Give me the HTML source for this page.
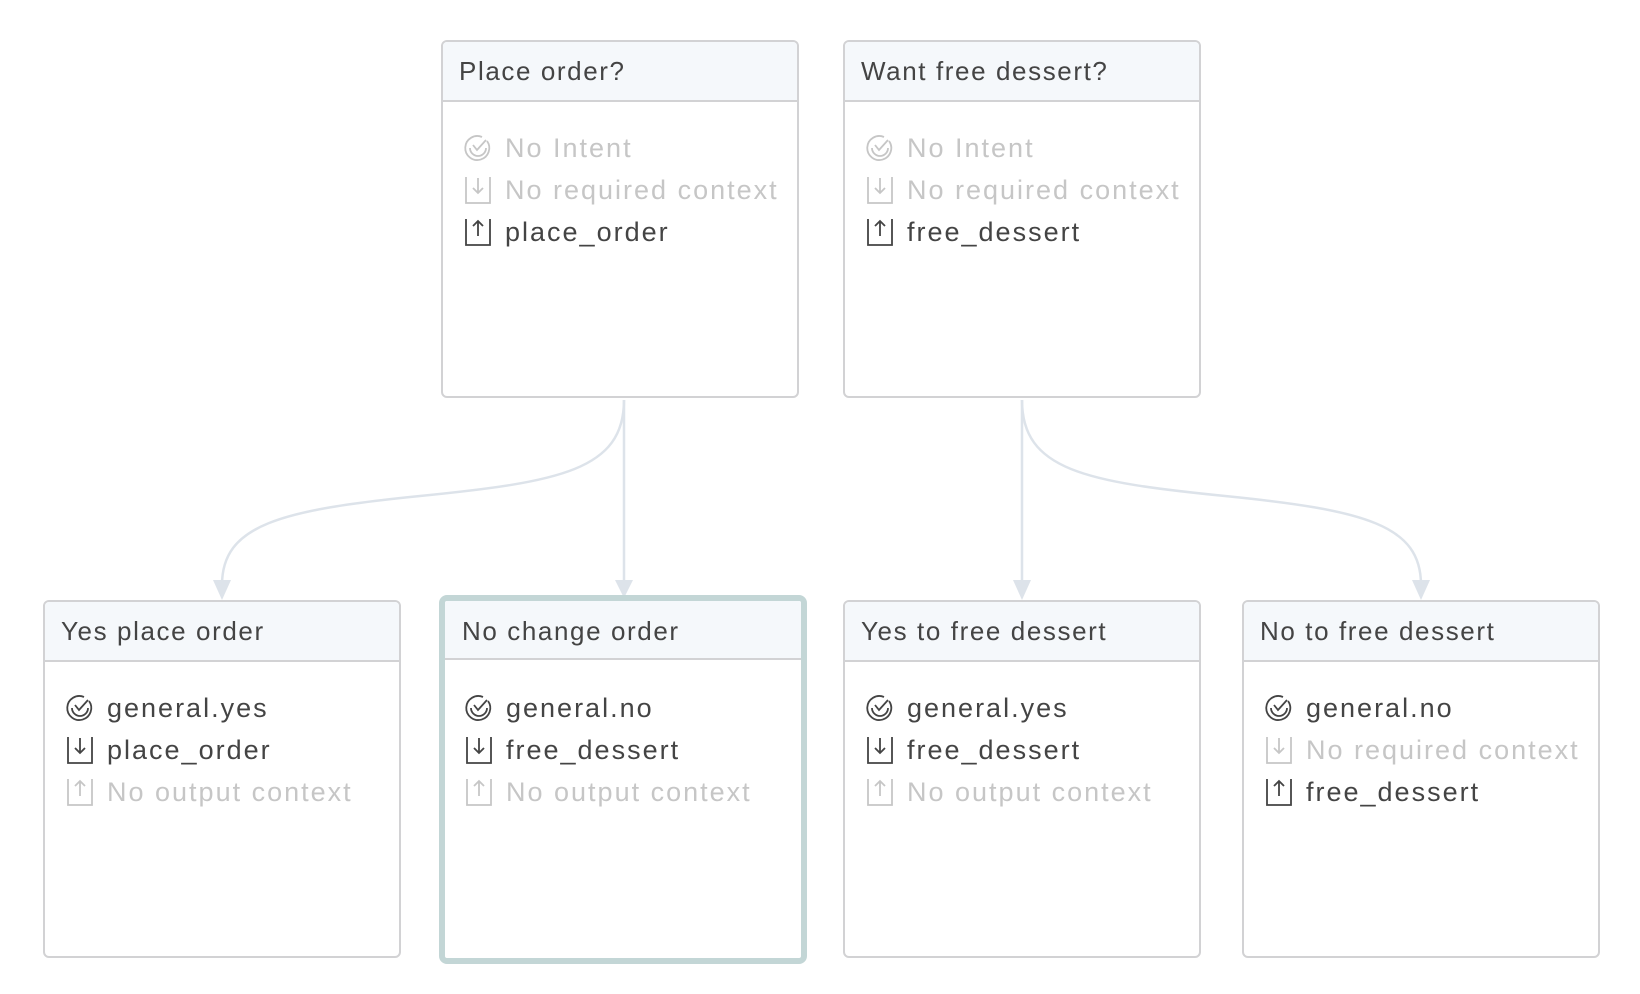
<!DOCTYPE html>
<html><head><meta charset="utf-8"><style>
*{box-sizing:border-box;margin:0;padding:0}
body{width:1640px;height:994px;background:#fff;font-family:"Liberation Sans",sans-serif;position:relative;overflow:hidden}
.box{position:absolute;width:358px;height:358px;border:2px solid #d2d2d4;border-radius:6px;background:#fff;overflow:hidden}
.box.sel{border:6px solid #c3d6d6;border-radius:8px}
.hd{height:60px;background:#f5f8fb;border-bottom:2px solid #d2d2d4;padding-left:16px;font-size:26px;letter-spacing:1.6px;line-height:58px;color:#444}
.bd{padding:25px 0 0 20px}
.r{height:42px;line-height:42px;font-size:27px;letter-spacing:2px;color:#444;display:flex;align-items:center;white-space:nowrap}
.r.m{color:#c6c6c6}
.r svg{width:30px;height:30px;margin-right:12px;flex:none}
</style></head><body>
<svg style="position:absolute;left:0;top:0" width="1640" height="994">
<g fill="none" stroke="#dde3ea" stroke-width="2.5">
<path d="M624 400 C624 470 560 482 420 496 C280 510 222 525 222 585"/>
<path d="M624 400 L624 585"/>
<path d="M1022 400 L1022 585"/>
<path d="M1022 400 C1022 470 1085 482 1225 496 C1365 510 1421 525 1421 585"/>
</g>
<g fill="#dde3ea">
<path d="M213 580 L231 580 L222 600Z"/><path d="M615 580 L633 580 L624 598Z"/>
<path d="M1013 580 L1031 580 L1022 600Z"/><path d="M1412 580 L1430 580 L1421 600Z"/>
</g>
</svg>
<svg width="0" height="0" style="position:absolute"><defs>
<g id="ci" fill="none" stroke="currentColor" stroke-width="1.8"><path d="M24 8 A12 12 0 1 1 19 4"/><path d="M7 15 A8 8 0 1 0 23 15"/><path d="M10 12 L14 17 L23 7"/></g>
<g id="dn" fill="none" stroke="currentColor" stroke-width="1.8"><path d="M3 2 V28 H27 V2"/><path d="M15 3 V18 M10 13 L15 18 L20 13"/></g>
<g id="up" fill="none" stroke="currentColor" stroke-width="1.8"><path d="M3 2 V28 H27 V2"/><path d="M15 19 V4 M10 9 L15 4 L20 9"/></g>
</defs></svg>

<div class="box" style="left:441px;top:40px"><div class="hd">Place order?</div><div class="bd">
<div class="r m"><svg viewBox="0 0 30 30"><use href="#ci"/></svg>No Intent</div>
<div class="r m"><svg viewBox="0 0 30 30"><use href="#dn"/></svg>No required context</div>
<div class="r"><svg viewBox="0 0 30 30"><use href="#up"/></svg>place_order</div></div></div>

<div class="box" style="left:843px;top:40px"><div class="hd">Want free dessert?</div><div class="bd">
<div class="r m"><svg viewBox="0 0 30 30"><use href="#ci"/></svg>No Intent</div>
<div class="r m"><svg viewBox="0 0 30 30"><use href="#dn"/></svg>No required context</div>
<div class="r"><svg viewBox="0 0 30 30"><use href="#up"/></svg>free_dessert</div></div></div>

<div class="box" style="left:43px;top:600px"><div class="hd">Yes place order</div><div class="bd">
<div class="r"><svg viewBox="0 0 30 30"><use href="#ci"/></svg>general.yes</div>
<div class="r"><svg viewBox="0 0 30 30"><use href="#dn"/></svg>place_order</div>
<div class="r m"><svg viewBox="0 0 30 30"><use href="#up"/></svg>No output context</div></div></div>

<div class="box sel" style="left:439px;top:595px;width:368px;height:369px"><div class="hd" style="height:59px;padding-left:17px;line-height:61px">No change order</div><div class="bd" style="padding-left:19px;padding-top:27px">
<div class="r"><svg viewBox="0 0 30 30"><use href="#ci"/></svg>general.no</div>
<div class="r"><svg viewBox="0 0 30 30"><use href="#dn"/></svg>free_dessert</div>
<div class="r m"><svg viewBox="0 0 30 30"><use href="#up"/></svg>No output context</div></div></div>

<div class="box" style="left:843px;top:600px"><div class="hd">Yes to free dessert</div><div class="bd">
<div class="r"><svg viewBox="0 0 30 30"><use href="#ci"/></svg>general.yes</div>
<div class="r"><svg viewBox="0 0 30 30"><use href="#dn"/></svg>free_dessert</div>
<div class="r m"><svg viewBox="0 0 30 30"><use href="#up"/></svg>No output context</div></div></div>

<div class="box" style="left:1242px;top:600px"><div class="hd">No to free dessert</div><div class="bd">
<div class="r"><svg viewBox="0 0 30 30"><use href="#ci"/></svg>general.no</div>
<div class="r m"><svg viewBox="0 0 30 30"><use href="#dn"/></svg>No required context</div>
<div class="r"><svg viewBox="0 0 30 30"><use href="#up"/></svg>free_dessert</div></div></div>
</body></html>
